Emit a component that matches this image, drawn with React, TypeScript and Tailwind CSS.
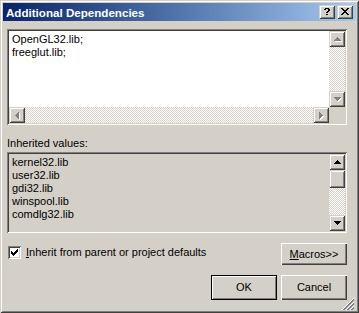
import React from 'react';

type Palette = Record<string, string>;

function Pixels({ rows, palette, className }: { rows: string[]; palette: Palette; className?: string }) {
  const w = rows[0].length;
  const h = rows.length;
  return (
    <svg width={w} height={h} viewBox={`0 0 ${w} ${h}`} shapeRendering="crispEdges" className={className}>
      {rows.flatMap((r, y) =>
        r.split('').map((c, x) =>
          palette[c] ? <rect key={`${x}-${y}`} x={x} y={y} width={1} height={1} fill={palette[c]} /> : null
        )
      )}
    </svg>
  );
}

const UP = ['...X...', '..XXX..', '.XXXXX.', 'XXXXXXX'];
const DOWN = [...UP].reverse();
const LEFT = ['...X', '..XX', '.XXX', 'XXXX', '.XXX', '..XX', '...X'];
const RIGHT = LEFT.map((r) => r.split('').reverse().join(''));

const CHECK = ['......X', '.....XX', 'X...XXX', 'XX.XXX.', 'XXXXX..', '.XXX...', '..X....'];
const CLOSE = ['XX....XX', '.XX..XX.', '..XXXX..', '...XX...', '..XXXX..', '.XX..XX.', 'XX....XX'];
const HELP = ['.XXXX.', 'XX..XX', '....XX', '...XX.', '..XX..', '......', '..XX..'];

// gray glyph with a white copy one pixel down-right, as disabled arrows are drawn
function emboss(rows: string[]): string[] {
  const h = rows.length + 1;
  const w = rows[0].length + 1;
  const out: string[] = [];
  for (let y = 0; y < h; y++) {
    let line = '';
    for (let x = 0; x < w; x++) {
      const on = rows[y]?.[x] === 'X';
      const sh = rows[y - 1]?.[x - 1] === 'X';
      line += on ? 'g' : sh ? 'w' : '.';
    }
    out.push(line);
  }
  return out;
}

function grip(): string[] {
  const out: string[] = [];
  for (let y = 0; y < 12; y++) {
    let line = '';
    for (let x = 0; x < 12; x++) {
      const k = x + y - 11;
      if (k < 0) line += '.';
      else line += ['w', 'g', 'g', '.'][k % 4];
    }
    out.push(line);
  }
  return out;
}

const BLACK: Palette = { X: '#000' };
const DIS: Palette = { g: '#808080', w: '#fff' };

function ScrollBtn({ glyph, disabled }: { glyph: string[]; disabled?: boolean }) {
  return (
    <div className="w-4 h-4 shrink-0 bg-[#d4d0c8] flex items-center justify-center shadow-[inset_1px_1px_0_#d4d0c8,inset_-1px_-1px_0_#404040,inset_2px_2px_0_#fff,inset_-2px_-2px_0_#808080]">
      {disabled ? (
        <Pixels rows={emboss(glyph)} palette={DIS} className="ml-[1px] mt-[1px]" />
      ) : (
        <Pixels rows={glyph} palette={BLACK} />
      )}
    </div>
  );
}

function Checker({ className }: { className?: string }) {
  return (
    <div
      className={`bg-[conic-gradient(#fff_25%,#d4d0c8_0_50%,#fff_0_75%,#d4d0c8_0)] bg-[length:2px_2px] ${className ?? ''}`}
    />
  );
}

function CaptionButton({ glyph }: { glyph: string[] }) {
  return (
    <div className="w-4 h-[14px] bg-[#d4d0c8] flex items-center justify-center shadow-[inset_1px_1px_0_#d4d0c8,inset_-1px_-1px_0_#404040,inset_2px_2px_0_#fff,inset_-2px_-2px_0_#808080]">
      <Pixels rows={glyph} palette={BLACK} className="-mt-[1px]" />
    </div>
  );
}

const SUNKEN =
  'shadow-[inset_1px_1px_0_#808080,inset_-1px_-1px_0_#fff,inset_2px_2px_0_#404040,inset_-2px_-2px_0_#d4d0c8]';

const INHERITED = ['kernel32.lib', 'user32.lib', 'gdi32.lib', 'winspool.lib', 'comdlg32.lib'];

export default function App() {
  return (
    <div className="w-[359px] h-[313px] bg-[#d4d0c8] p-[3px] flex flex-col font-['Liberation_Sans',Arial,sans-serif] text-[11px] leading-[13px] text-black select-none shadow-[inset_1px_1px_0_#d4d0c8,inset_-1px_-1px_0_#404040,inset_2px_2px_0_#fff,inset_-2px_-2px_0_#808080]">
      <div className="h-[18px] shrink-0 flex items-center bg-linear-to-r from-[#0a246a] to-[#a6caf0] pl-[3px] pr-[3px]">
        <span className="flex-1 text-white font-bold text-[11.6px]">Additional Dependencies</span>
        <div className="flex gap-[2px]">
          <CaptionButton glyph={HELP} />
          <CaptionButton glyph={CLOSE} />
        </div>
      </div>

      <div className="relative flex-1 flex flex-col pl-[4px] pr-[9px]">
        <div className={`mt-[8px] h-[96px] bg-white p-[2px] grid grid-cols-[1fr_16px] grid-rows-[1fr_16px] ${SUNKEN}`}>
          <div className="pt-[2px] pl-[3px]">
            <div>OpenGL32.lib;</div>
            <div>freeglut.lib;</div>
          </div>
          <div className="flex flex-col">
            <ScrollBtn glyph={UP} disabled />
            <Checker className="flex-1" />
            <ScrollBtn glyph={DOWN} disabled />
          </div>
          <div className="flex">
            <ScrollBtn glyph={LEFT} disabled />
            <Checker className="flex-1" />
            <ScrollBtn glyph={RIGHT} disabled />
          </div>
          <div className="bg-[#d4d0c8]" />
        </div>

        <div className="mt-[12px]">Inherited values:</div>

        <div className={`mt-[2px] h-[81px] bg-[#d4d0c8] p-[2px] flex ${SUNKEN}`}>
          <div className="flex-1 pt-[2px] pl-[3px]">
            {INHERITED.map((lib) => (
              <div key={lib}>{lib}</div>
            ))}
          </div>
          <div className="w-4 flex flex-col">
            <ScrollBtn glyph={UP} />
            <div className="h-[18px] shrink-0 bg-[#d4d0c8] shadow-[inset_1px_1px_0_#d4d0c8,inset_-1px_-1px_0_#404040,inset_2px_2px_0_#fff,inset_-2px_-2px_0_#808080]" />
            <Checker className="flex-1" />
            <ScrollBtn glyph={DOWN} />
          </div>
        </div>

        <div className="mt-[10px] h-[22px] flex items-start">
          <div className="mt-[3px] ml-[1px] flex items-center gap-[5px]">
            <div className={`w-[13px] h-[13px] bg-white flex items-center justify-center ${SUNKEN}`}>
              <Pixels rows={CHECK} palette={BLACK} />
            </div>
            <span>
              <span className="underline">I</span>nherit from parent or project defaults
            </span>
          </div>
          <button className="ml-auto w-[66px] h-[22px] bg-[#d4d0c8] flex items-center justify-center shadow-[inset_1px_1px_0_#fff,inset_-1px_-1px_0_#404040,inset_-2px_-2px_0_#808080]">
            <span>
              <span className="underline">M</span>acros&gt;&gt;
            </span>
          </button>
        </div>

        <div className="mt-[10px] flex justify-end gap-[4px]">
          <button className="w-[66px] h-[25px] bg-[#d4d0c8] flex items-center justify-center shadow-[inset_0_0_0_1px_#000,inset_2px_2px_0_#fff,inset_-2px_-2px_0_#808080]">
            OK
          </button>
          <button className="w-[66px] h-[25px] bg-[#d4d0c8] flex items-center justify-center shadow-[inset_1px_1px_0_#fff,inset_-1px_-1px_0_#404040,inset_-2px_-2px_0_#808080]">
            Cancel
          </button>
        </div>

        <Pixels rows={grip()} palette={DIS} className="absolute bottom-0 right-[2px]" />
      </div>
    </div>
  );
}
